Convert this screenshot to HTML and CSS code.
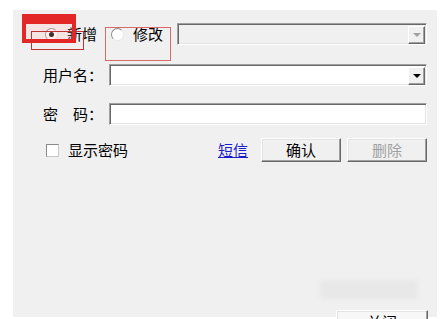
FILE: index.html
```html
<!DOCTYPE html>
<html lang="zh-CN">
<head>
  <meta charset="UTF-8" />
  <title>账号管理</title>
  <link rel="stylesheet" href="styles.css">
</head>
<body>
  <div class="dialog">
    <div class="row row-mode">
      <label class="radio"><span class="dot checked"></span>新增</label>
      <label class="radio"><span class="dot"></span>修改</label>
      <div class="combo disabled">
        <span class="combo-btn"><span class="arrow"></span></span>
      </div>
    </div>

    <div class="row row-user">
      <span class="label">用户名：</span>
      <div class="combo">
        <span class="combo-btn"><span class="arrow"></span></span>
      </div>
    </div>

    <div class="row row-pass">
      <span class="label">密　码：</span>
      <div class="field"></div>
    </div>

    <div class="row row-actions">
      <label class="check"><span class="box"></span>显示密码</label>
      <a class="link" href="#">短信</a>
      <button class="btn">确认</button>
      <button class="btn" disabled>删除</button>
    </div>

    <div class="row row-close">
      <button class="btn btn-close">关闭</button>
    </div>

    <div class="smudge"></div>
  </div>

  <!-- red highlight marks drawn over the screenshot -->
  <div class="mark mark-thick"></div>
  <div class="mark mark-thin"></div>
  <div class="mark mark-edit"></div>
</body>
</html>
```

FILE: styles.css
```css
* {
  box-sizing: border-box;
}

html, body {
  height: 100%;
}

body {
  margin: 0;
  background: #fff;
  overflow: hidden;
  position: relative;
  font-family: "Noto Sans CJK SC", "Noto Sans", sans-serif;
  font-size: 15px;
  line-height: 20px;
  color: #000;
}

.dialog {
  position: relative;
  margin: 10px 10px 0 13px;
  height: 307px;
  padding: 13px 10px 0 30px;
  background: #f0f0f0;
  display: flex;
  flex-direction: column;
}

.row {
  display: flex;
  align-items: center;
  height: 22px;
}

.row-user {
  margin-top: 19px;
}

.row-pass {
  margin-top: 17px;
}

.row-actions {
  margin-top: 13px;
  height: 24px;
}

.row-close {
  margin-top: 148px;
  justify-content: flex-end;
  height: 24px;
}

/* radios and checkbox */
.radio,
.check {
  display: flex;
  align-items: center;
  gap: 9px;
  padding-left: 2px;
}

.radio + .radio {
  margin-left: 12px;
}

.dot {
  width: 13px;
  height: 13px;
  border-radius: 50%;
  background: #fff;
  border: 1px solid;
  border-color: #8a8a8a #e8e8e8 #e8e8e8 #8a8a8a;
  display: flex;
  align-items: center;
  justify-content: center;
}

.dot.checked::after {
  content: "";
  width: 5px;
  height: 5px;
  border-radius: 50%;
  background: #000;
}

.check {
  padding-left: 3px;
}

.box {
  width: 13px;
  height: 13px;
  background: #fff;
  border: 1px solid;
  border-color: #8a8a8a #c8c8c8 #c8c8c8 #8a8a8a;
}

/* sunken inputs */
.combo,
.field {
  flex: 1;
  height: 22px;
  background: #fff;
  border: 1px solid;
  border-color: #a0a0a0 #fff #fff #a0a0a0;
  box-shadow: inset 1px 1px 0 #696969, inset -1px -1px 0 #e3e3e3;
}

.combo {
  display: flex;
  justify-content: flex-end;
  padding: 1px;
}

.row-mode .combo {
  margin-left: 14px;
}

.combo.disabled {
  background: #f0f0f0;
}

.label {
  width: 60px;
  margin-right: 6px;
  white-space: nowrap;
}

.combo-btn {
  width: 17px;
  height: 18px;
  margin-top: 1px;
  background: #f0f0f0;
  border: 1px solid;
  border-color: #fff #696969 #696969 #fff;
  box-shadow: inset -1px -1px 0 #a0a0a0;
  display: flex;
  align-items: center;
  justify-content: center;
}

.arrow {
  width: 0;
  height: 0;
  border-left: 4px solid transparent;
  border-right: 4px solid transparent;
  border-top: 4px solid #000;
}

.disabled .arrow {
  border-top-color: #a0a0a0;
}

/* link and buttons */
.link {
  margin-left: auto;
  margin-right: 13px;
  color: #1c1cc8;
  text-decoration: underline;
}

.btn {
  width: 80px;
  height: 24px;
  padding: 0;
  font: inherit;
  color: #000;
  background: #f0f0f0;
  border: 1px solid;
  border-color: #fff #696969 #696969 #fff;
  box-shadow: inset -1px -1px 0 #a0a0a0, inset 1px 1px 0 #e3e3e3;
}

.btn + .btn {
  margin-left: 6px;
}

.btn:disabled {
  color: #a0a0a0;
}

.btn-close {
  width: 92px;
  margin-right: -1px;
  background: #f7f7f7;
}

/* blurred patch near the bottom */
.smudge {
  position: absolute;
  left: 307px;
  top: 270px;
  width: 98px;
  height: 19px;
  background: #e8e8e8;
  filter: blur(2px);
}

/* annotation marks */
.mark {
  position: absolute;
  pointer-events: none;
}

.mark-thick {
  left: 22px;
  top: 14px;
  width: 54px;
  height: 29px;
  border: 4px solid #e32626;
  border-top-width: 10px;
  background: rgba(255, 190, 190, 0.25);
}

.mark-thin {
  left: 31px;
  top: 31px;
  width: 53px;
  height: 19px;
  border: 1.5px solid #c43030;
}

.mark-edit {
  left: 105px;
  top: 27px;
  width: 66px;
  height: 34px;
  border: 1px solid #d86a6a;
}
```
